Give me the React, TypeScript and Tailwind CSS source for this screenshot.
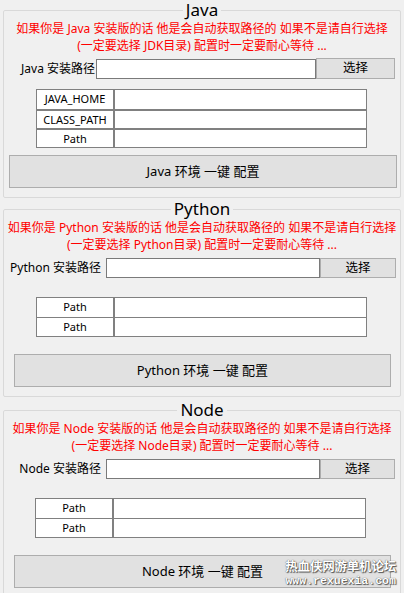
import React from 'react';

type Section = {
  name: string;
  dir: string;
  vars: string[];
  labelCls: string;
  pickCls: string;
  tableCls: string;
  rowSep: string;
  buttonCls: string;
  mtCls: string;
};

const sections: Section[] = [
  {
    name: 'Java',
    dir: 'JDK目录',
    vars: ['JAVA_HOME', 'CLASS_PATH', 'Path'],
    labelCls: 'w-[92px] pr-[1px]',
    pickCls: 'w-[79px] mr-[5px] h-[21px]',
    tableCls: 'mt-[10px] ml-[32px] w-[331px]',
    rowSep: 'border-t-2',
    buttonCls: 'mt-[7px] ml-[5px] mr-[3px]',
    mtCls: '',
  },
  {
    name: 'Python',
    dir: 'Python目录',
    vars: ['Path', 'Path'],
    labelCls: 'w-[102px] pr-[5px]',
    pickCls: 'w-[76px] mr-[4px] h-[20px]',
    tableCls: 'mt-[19px] ml-[32px] w-[331px]',
    rowSep: 'border-t',
    buttonCls: 'mt-[17px] ml-[10px] mr-[9px]',
    mtCls: 'mt-[1px]',
  },
  {
    name: 'Node',
    dir: 'Node目录',
    vars: ['Path', 'Path'],
    labelCls: 'w-[102px] pr-[5px]',
    pickCls: 'w-[75px] mr-[5px] h-[20px]',
    tableCls: 'mt-[19px] ml-[31px] w-[331px]',
    rowSep: 'border-t',
    buttonCls: 'mt-[17px] ml-[10px] mr-[9px]',
    mtCls: 'mt-[3px]',
  },
];

function EnvGroup({ s }: { s: Section }) {
  return (
    <fieldset className={`min-w-0 h-[198px] shrink-0 border border-[#d9d9d9] rounded-[2px] flex flex-col ${s.mtCls}`}>
      <legend className="mx-auto px-[3px] text-[17px] leading-[20px] text-black">{s.name}</legend>

      <div className="text-center text-[12px] leading-[17px] text-[#ff0000] whitespace-nowrap">
        <div>如果你是 {s.name} 安装版的话 他是会自动获取路径的 如果不是请自行选择</div>
        <div>(一定要选择 {s.dir}) 配置时一定要耐心等待 ...</div>
      </div>

      <div className="mt-[4px] h-[21px] flex items-center">
        <span className={`text-right text-[12px] text-black whitespace-nowrap ${s.labelCls}`}>
          {s.name} 安装路径
        </span>
        <div className="flex-1 h-[20px] bg-white border border-[#7a7a7a]" />
        <button className={`bg-[#e1e1e1] border border-[#adadad] text-[12.5px] text-black ${s.pickCls}`}>
          选择
        </button>
      </div>

      <div className={`border border-[#808080] bg-white ${s.tableCls}`}>
        {s.vars.map((v, i) => (
          <div key={i} className={`flex h-[19px] border-[#808080] ${i > 0 ? s.rowSep : ''}`}>
            <div className="w-[78px] border-r-2 border-[#808080] text-center text-[11px] leading-[18px] text-black">
              {v}
            </div>
            <div className="flex-1" />
          </div>
        ))}
      </div>

      <button
        className={`h-[33px] bg-[#e1e1e1] border border-[#adadad] text-[13px] text-black ${s.buttonCls}`}
      >
        {s.name} 环境 一键 配置
      </button>
    </fieldset>
  );
}

export default function App() {
  return (
    <div
      className="relative w-[404px] h-[593px] overflow-hidden bg-[#f0f0f0] px-[3px] flex flex-col"
      style={{ fontFamily: '"Noto Sans", "Noto Sans CJK SC", sans-serif' }}
    >
      {sections.map(s => (
        <EnvGroup key={s.name} s={s} />
      ))}

      <div className="absolute right-[8px] bottom-[7px] flex flex-col items-center text-white leading-none [text-shadow:0_0_1px_#333,1px_1px_1px_#555]">
        <span className="text-[12.5px] font-bold tracking-[-0.2px]" style={{ fontFamily: '"Noto Sans CJK SC", sans-serif' }}>
          热血侠网游单机论坛
        </span>
        <span className="mt-[2px] text-[11.5px] font-bold" style={{ fontFamily: '"Liberation Mono", monospace' }}>
          www.rexuexia.com
        </span>
      </div>
    </div>
  );
}
